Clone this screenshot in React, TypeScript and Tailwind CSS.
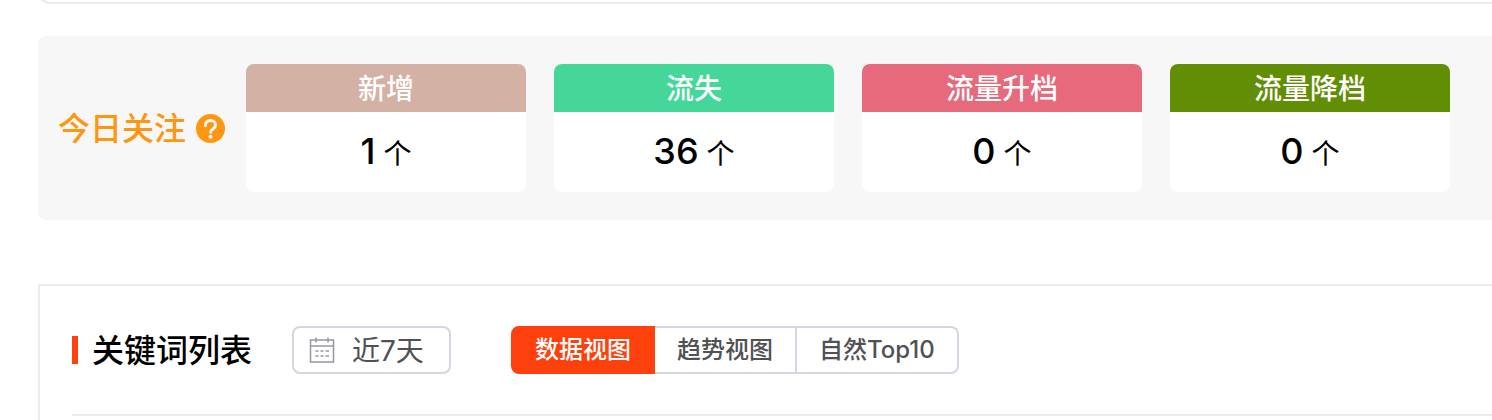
import { useState } from 'react';

const cards = [
    { label: '新增', count: 1, color: 'bg-[#d4b1a5]' },
    { label: '流失', count: 36, color: 'bg-[#45d799]' },
    { label: '流量升档', count: 0, color: 'bg-[#e7697c]' },
    { label: '流量降档', count: 0, color: 'bg-[#628e05]' },
];

const views = ['数据视图', '趋势视图', '自然Top10'];

function CalendarIcon() {
    return (
        <svg
            className="h-7 w-7 shrink-0"
            viewBox="0 0 28 28"
            fill="none"
            stroke="#95989e"
            strokeWidth="1.5"
            aria-hidden="true"
        >
            <path d="M2.5 4h23v22h-23zM2.5 10h23M8 1.5v5M20 1.5v5" />
            <path d="M7.5 15h3M12.5 15h3M17.5 15h3.5M7.5 20h3M12.5 20h3M17.5 20h3.5" />
        </svg>
    );
}

function HelpIcon() {
    return (
        <svg className="h-[29px] w-[29px]" viewBox="0 0 29 29" fill="none" aria-hidden="true">
            <circle cx="14.5" cy="14.5" r="14.5" fill="#ff9610" />
            <path
                d="M9.4 11.4c0-3 2.2-5 5.1-5 3 0 5.1 2 5.1 4.7 0 3.6-4.9 4-4.9 7.2"
                stroke="#f7f7f7"
                strokeWidth="3"
                strokeLinecap="round"
            />
            <circle cx="14.5" cy="22.8" r="2" fill="#f7f7f7" />
        </svg>
    );
}

function FocusCard({ label, count, color }: { label: string; count: number; color: string }) {
    return (
        <div className="w-[280px] shrink-0 overflow-hidden rounded-lg bg-white">
            <h3 className={`h-12 text-center text-[28px] leading-[50px] font-medium text-white ${color}`}>
                {label}
            </h3>
            <p className="flex h-20 items-baseline justify-center gap-2 text-[28px] leading-[78px] text-black">
                <span className="font-['Inter'] text-4xl leading-[78px] font-medium">{count}</span>
                <span>个</span>
            </p>
        </div>
    );
}

export default function App() {
    const [view, setView] = useState(views[0]);

    return (
        <main className="overflow-hidden bg-white pl-[38px] font-['Inter','Noto_Sans_CJK_SC',sans-serif]">
            <div className="flex h-1 items-end overflow-hidden">
                <div className="h-10 w-full shrink-0 rounded-bl-xl border-b-2 border-l-2 border-[#ebebeb]" />
            </div>

            <section className="mt-8 flex items-center rounded-l-lg bg-[#f7f7f7] py-7 pl-5">
                <div className="flex w-[188px] shrink-0 items-center gap-2.5">
                    <h2 className="pt-0.5 text-[32px] leading-12 font-medium text-[#ff9610]">今日关注</h2>
                    <button type="button" aria-label="说明">
                        <HelpIcon />
                    </button>
                </div>
                <div className="flex gap-7">
                    {cards.map((card) => (
                        <FocusCard key={card.label} {...card} />
                    ))}
                </div>
            </section>

            <section className="mt-16 border-t-2 border-l-2 border-[#ebebeb] pb-1 pl-8">
                <div className="flex h-[130px] items-center border-b-2 border-[#ebebeb]">
                    <span className="h-7 w-1.5 bg-[#fe400c]" />
                    <h2 className="ml-3.5 pt-0.5 text-[32px] leading-12 font-medium text-black">关键词列表</h2>

                    <label className="ml-10 flex h-12 w-[159px] items-center gap-4 rounded-lg border-2 border-[#d3d7e2] pl-3.5">
                        <CalendarIcon />
                        <input
                            type="text"
                            readOnly
                            value="近7天"
                            aria-label="日期范围"
                            className="w-full min-w-0 pt-0.5 text-[28px] text-[#505155] outline-none"
                        />
                    </label>

                    <div className="ml-15 flex h-12" role="group" aria-label="视图">
                        {views.map((name) => (
                            <button
                                key={name}
                                type="button"
                                aria-pressed={view === name}
                                onClick={() => setView(name)}
                                className={`border-y-2 border-r-2 px-[22px] text-2xl font-medium whitespace-nowrap first:rounded-l-lg first:border-l-2 last:rounded-r-lg ${
                                    view === name
                                        ? 'border-[#fe400c] bg-[#fe400c] text-white'
                                        : 'border-[#d3d7e2] bg-white text-[#505155]'
                                }`}
                            >
                                {name}
                            </button>
                        ))}
                    </div>
                </div>
            </section>
        </main>
    );
}
